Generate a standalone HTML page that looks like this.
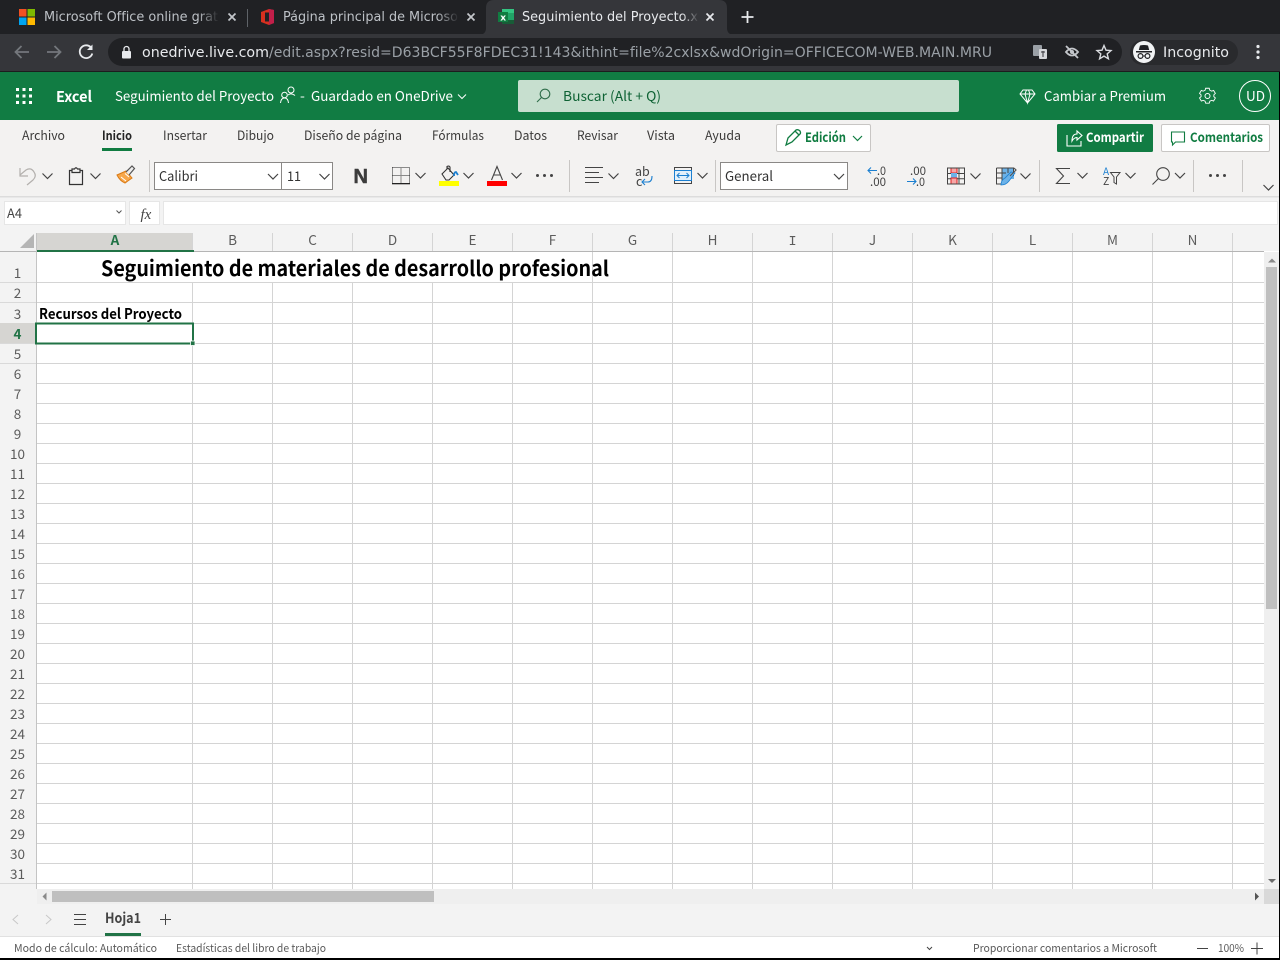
<!DOCTYPE html>
<html lang="es"><head><meta charset="utf-8"><title>Seguimiento del Proyecto</title>
<style>
html,body{margin:0;padding:0;background:#fff;width:1280px;height:960px;overflow:hidden}
svg{display:block;position:absolute;left:0;top:0}
.c{font-family:"DejaVu Sans",sans-serif}
.o{font-family:"Noto Sans CJK JP","Liberation Sans",sans-serif}
text{white-space:pre}
</style></head><body>
<svg width="1280" height="960" viewBox="0 0 1280 960" xmlns="http://www.w3.org/2000/svg">
<defs>
<path id="ch" d="M-5,-2.5L0,2.5L5,-2.5" fill="none" stroke="#444" stroke-width="1.2"/>
<linearGradient id="f1" x1="0" x2="1"><stop offset="0" stop-color="#202124" stop-opacity="0"/><stop offset="1" stop-color="#202124"/></linearGradient>
<linearGradient id="f2" x1="0" x2="1"><stop offset="0" stop-color="#35363a" stop-opacity="0"/><stop offset="1" stop-color="#35363a"/></linearGradient>
</defs>

<!-- browser tabs -->
<rect width="1280" height="35" fill="#202124"/>
<path d="M478,35C484,35 486,32 486,28V8Q486,0 494,0H719Q727,0 727,8V28C727,32 729,35 735,35Z" fill="#35363a"/>
<rect x="19" y="9" width="7.5" height="7.5" fill="#f25022"/><rect x="27.5" y="9" width="7.5" height="7.5" fill="#7fba00"/>
<rect x="19" y="17.5" width="7.5" height="7.5" fill="#00a4ef"/><rect x="27.5" y="17.5" width="7.5" height="7.5" fill="#ffb900"/>
<text class="c" x="44" y="21" font-size="13" fill="#bdc1c6" textLength="174" lengthAdjust="spacingAndGlyphs">Microsoft Office online grat</text>
<rect x="198" y="6" width="21" height="22" fill="url(#f1)"/>
<path d="M228.5,13.5l7,7m0,-7l-7,7" stroke="#c4c7cb" stroke-width="1.7"/>
<rect x="247" y="9" width="1" height="18" fill="#5f6368"/>
<path d="M261,12L269,9L274,10V23L269,25L261,22Z" fill="#d8301f"/><rect x="265" y="12.5" width="4" height="9" fill="#202124"/><path d="M269,9L274,10V23L269,25Z" fill="#c21f4a"/>
<text class="c" x="283" y="21" font-size="13" fill="#bdc1c6" textLength="175" lengthAdjust="spacingAndGlyphs">Página principal de Microso</text>
<rect x="437" y="6" width="22" height="22" fill="url(#f1)"/>
<path d="M467.5,13.5l7,7m0,-7l-7,7" stroke="#c4c7cb" stroke-width="1.7"/>
<rect x="502" y="9" width="12" height="15" rx="1" fill="#21a366"/><rect x="502" y="9" width="12" height="4" fill="#33c481"/><rect x="502" y="20" width="12" height="4" fill="#185c37"/>
<rect x="498" y="12" width="10" height="10" fill="#107c41"/><text class="c" x="500.2" y="20.5" font-size="9" font-weight="700" fill="#fff">x</text>
<text class="c" x="522" y="21" font-size="13" fill="#e8eaed" textLength="176" lengthAdjust="spacingAndGlyphs">Seguimiento del Proyecto.x</text>
<rect x="682" y="6" width="17" height="22" fill="url(#f2)"/>
<path d="M706.5,13.5l7,7m0,-7l-7,7" stroke="#e8eaed" stroke-width="1.7"/>
<path d="M747.5,11v12M741.5,17h12" stroke="#e8eaed" stroke-width="1.8"/>

<!-- browser toolbar -->
<rect y="34" width="1280" height="37" fill="#35363a"/><rect y="71" width="1280" height="1" fill="#1c1c1e"/>
<path d="M29,52H16M21.5,46L15.5,52L21.5,58" fill="none" stroke="#74777c" stroke-width="1.8"/>
<path d="M47,52H60M54.5,46L60.5,52L54.5,58" fill="none" stroke="#74777c" stroke-width="1.8"/>
<path d="M91,47.5A6.4,6.4 0 1 0 92.3,53.5" fill="none" stroke="#e8eaed" stroke-width="1.8"/><path d="M92.5,44.5V50H87Z" fill="#e8eaed"/>
<rect x="108" y="38" width="1014" height="28" rx="14" fill="#202124"/>
<rect x="122" y="51" width="9" height="7.5" rx="1" fill="#e8eaed"/><path d="M124,51V49A2.5,2.5 0 0 1 129,49V51" fill="none" stroke="#e8eaed" stroke-width="1.3"/>
<text class="c" x="142" y="57" font-size="14.5" fill="#e8eaed" textLength="127" lengthAdjust="spacingAndGlyphs">onedrive.live.com</text>
<text class="c" x="269" y="57" font-size="14.5" fill="#9aa0a6" textLength="723" lengthAdjust="spacingAndGlyphs">/edit.aspx?resid=D63BCF55F8FDEC31!143&amp;ithint=file%2cxlsx&amp;wdOrigin=OFFICECOM-WEB.MAIN.MRU</text>
<rect x="1033" y="45" width="9" height="11" rx="1" fill="#9aa0a6"/><rect x="1039" y="49" width="8" height="10" rx="1" fill="#d5d7da"/><path d="M1041,52h4M1043,51v6" stroke="#35363a" stroke-width="1"/>
<path d="M1066,52Q1072,45 1078,52Q1072,59 1066,52Z" fill="none" stroke="#c4c7cb" stroke-width="1.8"/><circle cx="1072" cy="52" r="2" fill="#c4c7cb"/><path d="M1066,46L1078,58" stroke="#c4c7cb" stroke-width="1.8"/>
<path d="M1104,45.5L1106,50.2L1111,50.6L1107.2,53.9L1108.4,58.8L1104,56.1L1099.6,58.8L1100.8,53.9L1097,50.6L1102,50.2Z" fill="none" stroke="#dadce0" stroke-width="1.4"/>
<rect x="1130" y="40" width="108" height="25" rx="12.5" fill="#292a2d"/>
<circle cx="1144" cy="52" r="11" fill="#f1f3f4"/>
<path d="M1136,51H1152V52.5H1136ZM1138.8,50L1140,45.5Q1144,44.5 1148,45.5L1149.2,50Z" fill="#202124"/>
<circle cx="1140.5" cy="56" r="2.4" fill="none" stroke="#202124" stroke-width="1.2"/><circle cx="1147.5" cy="56" r="2.4" fill="none" stroke="#202124" stroke-width="1.2"/><path d="M1143,56H1145" stroke="#202124"/>
<text class="c" x="1163" y="57" font-size="14" fill="#e8eaed" textLength="66" lengthAdjust="spacingAndGlyphs">Incognito</text>
<circle cx="1258" cy="46.5" r="1.6" fill="#e8eaed"/><circle cx="1258" cy="52" r="1.6" fill="#e8eaed"/><circle cx="1258" cy="57.5" r="1.6" fill="#e8eaed"/>

<!-- excel header -->
<rect y="72" width="1280" height="48" fill="#117c43"/>
<g fill="#fff"><rect x="16" y="88" width="3" height="3"/><rect x="22.500" y="88" width="3" height="3"/><rect x="29" y="88" width="3" height="3"/><rect x="16" y="94.500" width="3" height="3"/><rect x="22.500" y="94.500" width="3" height="3"/><rect x="29" y="94.500" width="3" height="3"/><rect x="16" y="101" width="3" height="3"/><rect x="22.500" y="101" width="3" height="3"/><rect x="29" y="101" width="3" height="3"/></g>
<text class="o" x="56" y="102" font-size="15" font-weight="700" fill="#fff" textLength="36" lengthAdjust="spacingAndGlyphs">Excel</text>
<text class="o" x="115" y="101" font-size="13.500" fill="#fff" textLength="159" lengthAdjust="spacingAndGlyphs">Seguimiento del Proyecto</text>
<g fill="none" stroke="#fff" stroke-width="1"><circle cx="284.500" cy="95" r="2.800"/><path d="M280.500,103Q281,98 284.500,98Q288,98 288.500,103"/><circle cx="291" cy="90" r="3"/><path d="M288,95Q291,92.500 295,95.500"/></g>
<text class="o" x="300" y="101" font-size="14" fill="#fff">-</text>
<text class="o" x="311" y="101" font-size="13.500" fill="#fff" textLength="142" lengthAdjust="spacingAndGlyphs">Guardado en OneDrive</text>
<path d="M458,94.500L462,98.500L466,94.500" fill="none" stroke="#fff"/>
<rect x="518" y="80" width="441" height="32" rx="2" fill="#c7dfcf"/>
<circle cx="545" cy="94" r="4.800" fill="none" stroke="#2f6e4a" stroke-width="1.100"/><path d="M541.500,97.500L537,102" stroke="#2f6e4a" stroke-width="1.100"/>
<text class="o" x="563" y="101" font-size="13.500" fill="#0e6234" textLength="98" lengthAdjust="spacingAndGlyphs">Buscar (Alt + Q)</text>
<path d="M1023,90H1032L1035,94L1027.500,103L1020,94ZM1020,94H1035M1025,94L1027.500,103L1030,94L1028.500,90M1025,94L1026.500,90" fill="none" stroke="#fff"/>
<text class="o" x="1044" y="101" font-size="13.500" fill="#fff" textLength="122" lengthAdjust="spacingAndGlyphs">Cambiar a Premium</text>
<circle cx="1207.500" cy="96" r="2.500" fill="none" stroke="#fff"/>
<path d="M1205.500,88.500h4l.6,2.200 2.100,1 2.100,-.8 2,3.400 -1.700,1.500v2l1.700,1.500 -2,3.400 -2.100,-.8 -2.100,1 -.6,2.200h-4l-.6,-2.200 -2.100,-1 -2.100,.8 -2,-3.400 1.700,-1.500v-2l-1.700,-1.500 2,-3.400 2.100,.8 2.100,-1z" fill="none" stroke="#fff" transform="translate(120.700 8.600) scale(.9)"/>
<circle cx="1255" cy="96" r="15.500" fill="none" stroke="#fff"/>
<text class="o" x="1246" y="101" font-size="13.500" fill="#fff" textLength="19" lengthAdjust="spacingAndGlyphs">UD</text>

<!-- ribbon -->
<rect y="120" width="1280" height="76" fill="#f3f2f1"/>
<g class="o" font-size="12.500" fill="#3b3a39">
<text x="22" y="140" textLength="43" lengthAdjust="spacingAndGlyphs">Archivo</text>
<text x="102" y="140" font-weight="700" fill="#242424" textLength="30" lengthAdjust="spacingAndGlyphs">Inicio</text>
<text x="163" y="140" textLength="44" lengthAdjust="spacingAndGlyphs">Insertar</text>
<text x="237" y="140" textLength="37" lengthAdjust="spacingAndGlyphs">Dibujo</text>
<text x="304" y="140" textLength="98" lengthAdjust="spacingAndGlyphs">Diseño de página</text>
<text x="432" y="140" textLength="52" lengthAdjust="spacingAndGlyphs">Fórmulas</text>
<text x="514" y="140" textLength="33" lengthAdjust="spacingAndGlyphs">Datos</text>
<text x="577" y="140" textLength="41" lengthAdjust="spacingAndGlyphs">Revisar</text>
<text x="647" y="140" textLength="28" lengthAdjust="spacingAndGlyphs">Vista</text>
<text x="705" y="140" textLength="36" lengthAdjust="spacingAndGlyphs">Ayuda</text>
</g>
<rect x="102" y="148" width="30" height="3" fill="#107c41"/>
<rect x="776.500" y="124.500" width="94" height="27" rx="1.500" fill="#fff" stroke="#c8c6c4"/>
<path d="M786,145L788,138L796,130Q798,129 800,131Q801,133 800,134L792,142Z M795,131L799,135" fill="none" stroke="#107c41" stroke-width="1.300"/>
<text class="o" x="805" y="142" font-size="13" font-weight="700" fill="#107c41" textLength="41" lengthAdjust="spacingAndGlyphs">Edición</text>
<path d="M853,136L857.500,140.500L862,136" fill="none" stroke="#107c41" stroke-width="1.200"/>
<rect x="1057" y="124" width="96" height="28" rx="1.500" fill="#117c43"/>
<path d="M1067,135V146H1081V141M1072,141Q1072,134 1077,134V131L1082,135.500L1077,140V137.500Q1074,137.500 1072,141Z" fill="none" stroke="#fff" stroke-width="1.100"/>
<text class="o" x="1086" y="142" font-size="13" font-weight="700" fill="#fff" textLength="58" lengthAdjust="spacingAndGlyphs">Compartir</text>
<rect x="1161.500" y="124.500" width="108" height="27" rx="1.500" fill="#fff" stroke="#c8c6c4"/>
<path d="M1171.500,132H1184.500V142H1175.500L1172.500,145V142H1171.500Z" fill="none" stroke="#107c41" stroke-width="1.100"/>
<text class="o" x="1190" y="142" font-size="13" font-weight="700" fill="#107c41" textLength="73" lengthAdjust="spacingAndGlyphs">Comentarios</text>

<g fill="#c8c6c4"><rect x="149" y="160" width="1" height="32"/><rect x="569" y="160" width="1" height="32"/><rect x="715" y="160" width="1" height="32"/><rect x="1039" y="160" width="1" height="32"/><rect x="1193" y="160" width="1" height="32"/><rect x="1242" y="160" width="1" height="32"/></g>

<!-- undo / clipboard / painter -->
<path d="M20,168V176H28M20,175L26,170Q31,167 34,172Q37,176 33,180L27,185" fill="none" stroke="#b3b0ad" stroke-width="1.200"/>
<use href="#ch" x="47.500" y="176"/>
<path d="M72,170.500H69.500V184.500H82.500V170.500H80M72,172.500V169H74.500Q76,166.500 77.500,169H80V172.500Z" fill="none" stroke="#333" stroke-width="1.200"/>
<use href="#ch" x="95.500" y="176"/>
<path d="M117,175L126,171L132,178L125,183Q120,181 117,175Z" fill="#f7a74a" stroke="#d97a15"/><path d="M121,177L126,181M125,173.500L129,177" stroke="#fff"/><path d="M126,172L132,166L134.500,168.500L129,175" fill="#eee" stroke="#555" stroke-width="1.200"/>

<!-- font -->
<rect x="154.500" y="162.500" width="127" height="27" fill="#fff" stroke="#8a8886"/>
<text class="o" x="159" y="181" font-size="13.500" fill="#333" textLength="39" lengthAdjust="spacingAndGlyphs">Calibri</text>
<use href="#ch" x="273" y="176.500"/>
<rect x="281.500" y="162.500" width="51" height="27" fill="#fff" stroke="#8a8886"/>
<text class="o" x="287" y="181" font-size="13.500" fill="#333" textLength="14" lengthAdjust="spacingAndGlyphs">11</text>
<use href="#ch" x="324.500" y="176.500"/>
<text x="353.500" y="183" font-family="Liberation Sans,sans-serif" font-size="20" font-weight="700" fill="#3c3c3c" stroke="#3c3c3c" stroke-width=".5">N</text>
<path d="M392.500,167.500H409.500V183M392.500,167.500V183M401,167.500V183M392.500,175.500H409.500" fill="none" stroke="#222" stroke-dasharray="1 1" shape-rendering="crispEdges"/><rect x="392" y="183" width="18" height="1.300" fill="#222"/>
<use href="#ch" x="420.500" y="175.500"/>
<path d="M442,174L448,168L454,175L449,180H446Z M447,169V166.500Q449,165.500 450,167V172" fill="none" stroke="#333" stroke-width="1.100"/><path d="M454,176Q454,172 456,172L458,175" fill="none" stroke="#1b7fd0" stroke-width="1.800"/>
<rect x="439" y="181" width="20" height="5" fill="#ffff00"/>
<use href="#ch" x="468.500" y="175.500"/>
<path d="M491.500,180L497,166.500L502.500,180M493.500,175H500.500" fill="none" stroke="#444" stroke-width="1.100"/>
<rect x="487" y="181" width="20" height="5" fill="#ff0000"/>
<use href="#ch" x="516.500" y="175.500"/>
<g fill="#444"><circle cx="537.500" cy="175.500" r="1.500"/><circle cx="544.500" cy="175.500" r="1.500"/><circle cx="551.500" cy="175.500" r="1.500"/></g>

<!-- alignment -->
<path d="M585,167.500H603M585,172.500H599M585,177.500H603M585,182.500H599" stroke="#444" stroke-width="1"/>
<use href="#ch" x="613.500" y="176"/>
<text class="o" x="635" y="176" font-size="12.500" fill="#444">ab</text><text class="o" x="636" y="186" font-size="12.500" fill="#444">c</text>
<path d="M652,176Q652,182 648,182H642M645,179L642,182L645,185" fill="none" stroke="#1b7fd0" stroke-width="1.100"/>
<rect x="674.500" y="167.500" width="17" height="16" fill="none" stroke="#444"/>
<rect x="674.500" y="170.500" width="17" height="10" fill="#e3f0fa" stroke="#1b7fd0"/>
<path d="M677,175.500H689M679.500,173L677,175.500L679.500,178M686.500,173L689,175.500L686.500,178" fill="none" stroke="#1b7fd0"/>
<use href="#ch" x="702.500" y="175.500"/>

<!-- number -->
<rect x="720.500" y="162.500" width="127" height="27" fill="#fff" stroke="#8a8886"/>
<text class="o" x="725" y="181" font-size="13.500" fill="#333" textLength="48" lengthAdjust="spacingAndGlyphs">General</text>
<use href="#ch" x="839" y="176.500"/>
<path d="M877,170.500H868M871,167.500L868,170.500L871,173.500" fill="none" stroke="#1b7fd0" stroke-width="1.100"/>
<text class="o" x="877" y="175" font-size="11.500" fill="#444" textLength="9" lengthAdjust="spacingAndGlyphs">.0</text>
<text class="o" x="870" y="186" font-size="11.500" fill="#444" textLength="16" lengthAdjust="spacingAndGlyphs">.00</text>
<text class="o" x="910" y="175" font-size="11.500" fill="#444" textLength="16" lengthAdjust="spacingAndGlyphs">.00</text>
<path d="M907,181.500H916M913,178.500L916,181.500L913,184.500" fill="none" stroke="#1b7fd0" stroke-width="1.100"/>
<text class="o" x="916" y="186" font-size="11.500" fill="#444" textLength="9" lengthAdjust="spacingAndGlyphs">.0</text>
<!-- conditional format -->
<rect x="951" y="168" width="6" height="5" fill="#f7a6a6" stroke="#e02020"/><rect x="951" y="173" width="6" height="5" fill="#6cb2e8"/><rect x="951" y="178" width="6" height="6" fill="#f7a6a6" stroke="#e02020"/>
<path d="M947.500,168H964.500V184H947.500ZM959,168V184M947.500,173.500H951M947.500,178.800H951M957,173.500H964.500M957,178.800H964.500" fill="none" stroke="#444"/>
<use href="#ch" x="975.500" y="176"/>
<!-- table format -->
<rect x="1002" y="168" width="12" height="11" fill="#6cb2e8"/>
<path d="M996.500,168H1013.500V176M996.500,168V184H1002M996.500,173H1006M996.500,178H1002M1002,168V184M1008,168V173" fill="none" stroke="#444"/>
<path d="M1001,185Q1001,180 1005,178L1011,172L1015,173L1009,181Q1006,185 1001,185Z" fill="#6cb2e8" stroke="#1b7fd0" stroke-width=".8"/>
<path d="M1010,176L1016,170L1014,168" fill="none" stroke="#555" stroke-width="1.200"/>
<use href="#ch" x="1025.500" y="176"/>
<!-- editing -->
<path d="M1070,168.500H1056.500L1063.500,176L1056.500,183.500H1070" fill="none" stroke="#444" stroke-width="1.100"/>
<use href="#ch" x="1082.500" y="175.500"/>
<text class="o" x="1103" y="175" font-size="10" fill="#1b7fd0">A</text><text class="o" x="1103" y="185" font-size="10.500" fill="#444">Z</text>
<path d="M1110.500,172.500H1120L1116.500,177V184L1114,182.500V177Z" fill="none" stroke="#444"/>
<use href="#ch" x="1130.500" y="175.500"/>
<circle cx="1163" cy="174" r="6.300" fill="none" stroke="#444" stroke-width="1.100"/><path d="M1158.500,178.500L1152.500,184.500" stroke="#444" stroke-width="1.100"/>
<use href="#ch" x="1180" y="175.500"/>
<g fill="#444"><circle cx="1210.500" cy="175.500" r="1.500"/><circle cx="1217.500" cy="175.500" r="1.500"/><circle cx="1224.500" cy="175.500" r="1.500"/></g>
<use href="#ch" x="1268.500" y="187.500"/>

<!-- formula bar -->
<rect y="196" width="1280" height="37" fill="#f3f3f3"/>
<rect y="196" width="1280" height="1" fill="#dcdcdc"/><rect y="197" width="1280" height="1" fill="#e8e8e8"/>
<rect x="4.500" y="201.500" width="121" height="23" fill="#fff" stroke="#e6e6e6"/>
<text class="o" x="7" y="218" font-size="13" fill="#444" textLength="15" lengthAdjust="spacingAndGlyphs">A4</text>
<path d="M116.500,210.500L119,213L121.500,210.500" fill="none" stroke="#555" stroke-width="1"/>
<rect x="129.500" y="201.500" width="30" height="23" fill="#fff" stroke="#e6e6e6"/>
<text x="140.500" y="219" font-family="Liberation Serif,serif" font-style="italic" font-size="15" fill="#444">fx</text>
<rect x="163.500" y="201.500" width="1114" height="23" fill="#fff" stroke="#e6e6e6"/>

<!-- column header -->
<rect y="233" width="1280" height="18" fill="#f3f3f3"/>
<path d="M20,248L34,234V248Z" fill="#b5b5b5"/>
<rect x="37" y="233" width="156" height="18" fill="#d6d5d2"/>

<!-- grid -->
<rect x="37" y="252" width="1227" height="637" fill="#fff"/>
<g stroke="#d4d4d4" stroke-width="1">
<path d="M192.500,252V889M272.500,252V889M352.500,252V889M432.500,252V889M512.500,252V889M592.500,252V889M672.500,252V889M752.500,252V889M832.500,252V889M912.500,252V889M992.500,252V889M1072.500,252V889M1152.500,252V889M1232.500,252V889"/>
<path d="M37,282.500H1264M37,302.500H1264M37,323.500H1264M37,343.500H1264M37,363.500H1264M37,383.500H1264M37,403.500H1264M37,423.500H1264M37,443.500H1264M37,463.500H1264M37,483.500H1264M37,503.500H1264M37,523.500H1264M37,543.500H1264M37,563.500H1264M37,583.500H1264M37,603.500H1264M37,623.500H1264M37,643.500H1264M37,663.500H1264M37,683.500H1264M37,703.500H1264M37,723.500H1264M37,743.500H1264M37,763.500H1264M37,783.500H1264M37,803.500H1264M37,823.500H1264M37,843.500H1264M37,863.500H1264M37,883.500H1264"/>
</g>
<!-- mask merged title row interior -->
<rect x="193" y="252" width="399" height="30" fill="#fff"/><rect x="37" y="252" width="156" height="30" fill="#fff"/>
<path d="M192.500,233V251M272.500,233V251M352.500,233V251M432.500,233V251M512.500,233V251M592.500,233V251M672.500,233V251M752.500,233V251M832.500,233V251M912.500,233V251M992.500,233V251M1072.500,233V251M1152.500,233V251M1232.500,233V251" stroke="#d4d4d4"/>
<rect x="0" y="251" width="1264" height="1" fill="#b5b5b5"/>
<rect x="37" y="250" width="157" height="2" fill="#217346"/>
<rect x="0" y="252" width="36" height="637" fill="#f3f3f3"/>
<rect x="36" y="233" width="1" height="656" fill="#c4c4c4"/>
<rect x="0" y="323" width="36" height="21" fill="#d6d5d2"/>
<g stroke="#d9d9d9"><path d="M0,282.500H36M0,302.500H36M0,343.500H36M0,363.500H36M0,883.500H36"/></g>

<!-- col letters -->
<g class="o" font-size="13.500" fill="#5c5c5c" text-anchor="middle">
<text x="115" y="245" fill="#217346" font-weight="700">A</text>
<text x="232.500" y="245">B</text><text x="312.500" y="245">C</text><text x="392.500" y="245">D</text><text x="472.500" y="245">E</text><text x="552.500" y="245">F</text><text x="632.500" y="245">G</text><text x="712.500" y="245">H</text><text x="792.500" y="245" font-family="Liberation Mono,monospace">I</text><text x="872.500" y="245">J</text><text x="952.500" y="245">K</text><text x="1032.500" y="245">L</text><text x="1112.500" y="245">M</text><text x="1192.500" y="245">N</text>
</g>
<!-- row numbers -->
<g class="o" font-size="13.500" fill="#5c5c5c" text-anchor="middle">
<text x="17.500" y="278">1</text><text x="17.500" y="298">2</text><text x="17.500" y="319">3</text><text x="17.500" y="339" fill="#217346" font-weight="700">4</text><text x="17.500" y="359">5</text><text x="17.500" y="379">6</text><text x="17.500" y="399">7</text><text x="17.500" y="419">8</text><text x="17.500" y="439">9</text><text x="17.500" y="459">10</text><text x="17.500" y="479">11</text><text x="17.500" y="499">12</text><text x="17.500" y="519">13</text><text x="17.500" y="539">14</text><text x="17.500" y="559">15</text><text x="17.500" y="579">16</text><text x="17.500" y="599">17</text><text x="17.500" y="619">18</text><text x="17.500" y="639">19</text><text x="17.500" y="659">20</text><text x="17.500" y="679">21</text><text x="17.500" y="699">22</text><text x="17.500" y="719">23</text><text x="17.500" y="739">24</text><text x="17.500" y="759">25</text><text x="17.500" y="779">26</text><text x="17.500" y="799">27</text><text x="17.500" y="819">28</text><text x="17.500" y="839">29</text><text x="17.500" y="859">30</text><text x="17.500" y="879">31</text>
</g>
<!-- cell content -->
<text class="o" x="101" y="276" font-size="21" font-weight="700" fill="#000" textLength="508" lengthAdjust="spacingAndGlyphs">Seguimiento de materiales de desarrollo profesional</text>
<text class="o" x="39" y="319" font-size="14.500" font-weight="700" fill="#000" textLength="143" lengthAdjust="spacingAndGlyphs">Recursos del Proyecto</text>
<!-- selection -->
<rect x="36" y="323.500" width="157" height="20" fill="none" stroke="#217346" stroke-width="2"/>
<rect x="190.500" y="341" width="4.500" height="4.500" fill="#217346" stroke="#fff" stroke-width=".8"/>

<!-- vertical scrollbar -->
<rect x="1264" y="252" width="15" height="637" fill="#efefef"/>
<path d="M1268,262.500H1276L1272,258.500Z" fill="#8a8a8a"/>
<rect x="1266" y="267" width="11" height="342" fill="#bfbfbf"/>
<path d="M1268,879H1276L1272,883Z" fill="#6b6b6b"/>

<!-- horizontal scrollbar -->
<rect x="0" y="889" width="37" height="15" fill="#f3f3f3"/>
<rect x="37" y="889" width="1227" height="15" fill="#efefef"/>
<rect x="1264" y="889" width="15" height="15" fill="#d9d9d9"/>
<path d="M46.500,892.500V900.500L42.500,896.500Z" fill="#8a8a8a"/>
<rect x="52" y="891" width="382" height="11" fill="#bfbfbf"/>
<path d="M1255,892.500V900.500L1259,896.500Z" fill="#555"/>

<!-- sheet bar -->
<rect y="904" width="1280" height="32" fill="#f3f3f3"/>
<path d="M18,915L13,919.500L18,924" fill="none" stroke="#c8c8c8" stroke-width="1"/>
<path d="M46,915L51,919.500L46,924" fill="none" stroke="#c8c8c8" stroke-width="1"/>
<path d="M74,914.500H86M74,919.500H86M74,924.500H86" stroke="#444" stroke-width="1"/>
<text class="o" x="105" y="923" font-size="14" font-weight="700" fill="#444" textLength="36" lengthAdjust="spacingAndGlyphs">Hoja1</text>
<rect x="105" y="933" width="36" height="3" fill="#217346"/>
<path d="M165.500,914V925M160,919.500H171" stroke="#444" stroke-width="1"/>

<!-- status bar -->
<rect y="936" width="1280" height="1" fill="#e1e1e1"/>
<rect y="937" width="1280" height="21" fill="#fff"/>
<g class="o" font-size="11" fill="#5a5a5a">
<text x="14" y="952" textLength="143" lengthAdjust="spacingAndGlyphs">Modo de cálculo: Automático</text>
<text x="176" y="952" textLength="150" lengthAdjust="spacingAndGlyphs">Estadísticas del libro de trabajo</text>
<text x="973" y="952" textLength="184" lengthAdjust="spacingAndGlyphs">Proporcionar comentarios a Microsoft</text>
<text x="1218" y="952" textLength="26" lengthAdjust="spacingAndGlyphs">100%</text>
</g>
<path d="M927,947L929.500,949.500L932,947" fill="none" stroke="#444"/>
<path d="M1197,948.500H1208M1251,948.500H1263M1257,942.500V954.500" stroke="#444"/>

<!-- window edges -->
<rect x="1279" y="72" width="1" height="888" fill="#000"/>
<rect y="958" width="1280" height="2" fill="#000"/>
</svg>
</body></html>
